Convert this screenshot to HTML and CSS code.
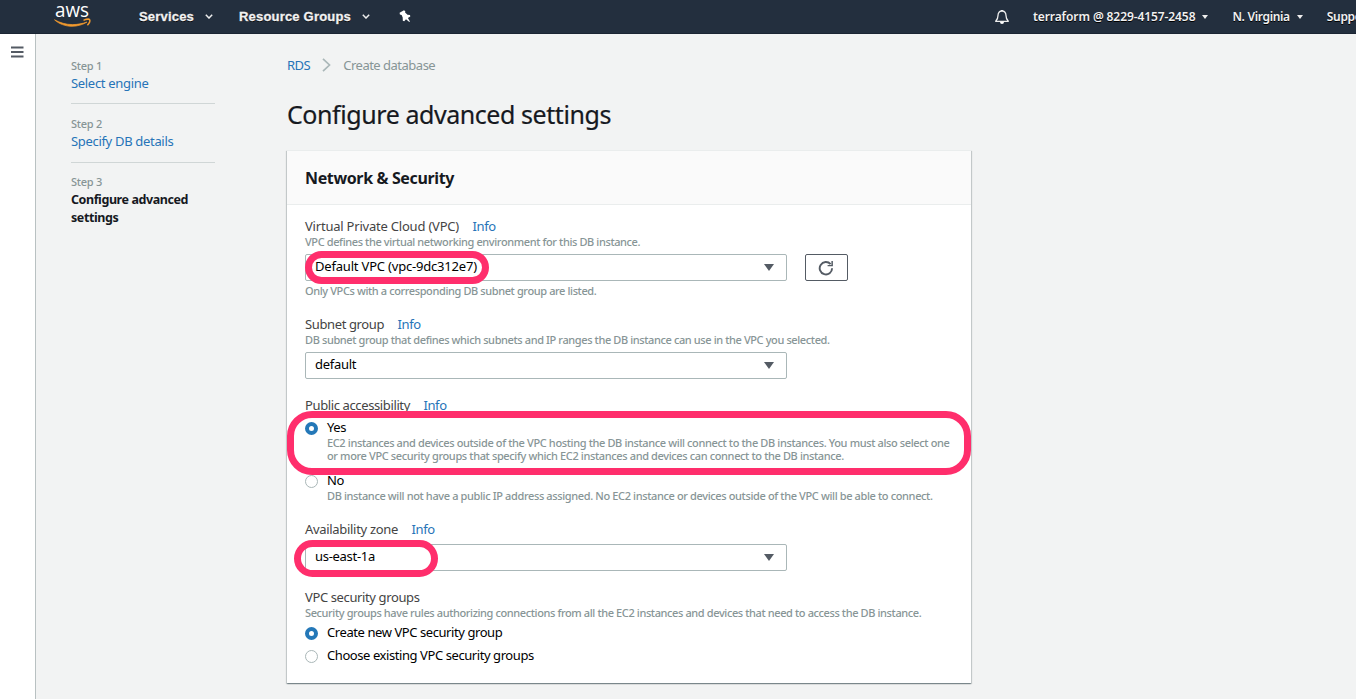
FILE: index.html
```html
<!DOCTYPE html>
<html lang="en">
<head>
<meta charset="utf-8">
<title>RDS - Create database</title>
<link rel="stylesheet" href="styles.css">
</head>
<body>
<header class="topbar">
  <svg class="logo" viewBox="0 0 38 24" width="38" height="24"><text x="1" y="12" class="logo-word" textLength="34" lengthAdjust="spacingAndGlyphs">aws</text><path d="M.5 14.800C5 19 11.500 21.300 18 21.300c5.500 0 10.800-1.600 15-4.200-4.500 1.600-9.500 2.500-14.600 2.500C12 19.600 6 17.800.5 14.800z" fill="#f29a2e" stroke="#f29a2e" stroke-width=".7"/><path d="M29.500 15.400c3-1.300 5.800-1.300 6.200-.6.400 1-.4 3.500-2.300 5.500" fill="none" stroke="#f29a2e" stroke-width="1.500"/></svg>
  <div class="menu services"><span>Services</span><svg width="8" height="5" viewBox="0 0 8 5"><path d="M.8.800 4 4 7.200.800" /></svg></div>
  <div class="menu groups"><span>Resource Groups</span><svg width="8" height="5" viewBox="0 0 8 5"><path d="M.8.800 4 4 7.200.800" /></svg></div>
  <svg class="pin" width="12" height="13" viewBox="0 0 12 13"><path d="M.6 2.800 5 .3 6.300 1.200 6.100 2.600 8.500 4.700 11 5 11.300 6.600 8.900 8.100 10.900 11.400 10.300 12 7 9.200 5.200 11.300 3.800 10.800 3.700 7.600 2.600 4.900.9 4.400z"/></svg>
  <div class="account">
    <svg class="bell" width="16" height="16" viewBox="0 0 16 16"><path d="M1.700 12.300h12.600c-2-2-2.300-3.300-2.300-5.800C12 3.700 10.500 2 8 2S4 3.700 4 6.500c0 2.500-.3 3.800-2.300 5.800z" fill="none" stroke="#eee" stroke-width="1.300" stroke-linejoin="round"/><path d="M6 13h4a2 2 0 0 1-4 0zM7.200.9h1.600V2H7.200z" fill="#fff"/></svg>
    <span class="user">terraform @ 8229-4157-2458</span><i class="caret"></i>
    <span class="region">N. Virginia</span><i class="caret"></i>
    <span class="support">Support</span>
  </div>
</header>
<div class="shell">
  <aside class="rail"><svg width="13" height="12" viewBox="0 0 13 12"><path d="M0 1.500h12.500M0 6h12.500M0 10.500h12.500" stroke="#545b64" stroke-width="1.800"/></svg></aside>
  <nav class="steps">
    <div class="step"><small>Step 1</small><a>Select engine</a></div>
    <div class="step second"><small>Step 2</small><a>Specify DB details</a></div>
    <div class="step current"><small>Step 3</small><b>Configure advanced<br>settings</b></div>
  </nav>
  <main>
    <div class="crumbs"><a>RDS</a><svg width="9" height="14" viewBox="0 0 9 14"><path d="M1 .8 7.500 7 1 13.200" fill="none" stroke="#aab7b8" stroke-width="1.700"/></svg><span>Create database</span></div>
    <h1>Configure advanced settings</h1>
    <section class="card">
      <h2>Network &amp; Security</h2>
      <div class="body">
        <div class="field vpc">
          <label><span>Virtual Private Cloud (VPC)</span> <a>Info</a></label>
          <p>VPC defines the virtual networking environment for this DB instance.</p>
          <div class="row">
            <div class="select"><span>Default VPC (vpc-9dc312e7)</span><i></i><div class="mark mark-vpc"></div></div>
            <button class="refresh" aria-label="Refresh"><svg width="16" height="16" viewBox="0 0 16 16"><path d="M14.100 8.200A6.200 6.200 0 1 1 12.600 4.200" fill="none" stroke="#545b64" stroke-width="1.900"/><path d="M14.900.9v5.400H9.600V4.900l3.800 0V.9z" fill="#545b64"/></svg></button>
          </div>
          <p class="hint">Only VPCs with a corresponding DB subnet group are listed.</p>
        </div>
        <div class="field subnet">
          <label><span>Subnet group</span> <a>Info</a></label>
          <p>DB subnet group that defines which subnets and IP ranges the DB instance can use in the VPC you selected.</p>
          <div class="select"><span>default</span><i></i></div>
        </div>
        <div class="field public">
          <label><span>Public accessibility</span> <a>Info</a></label>
          <div class="option yes"><i class="radio on"></i><div><strong>Yes</strong><p>EC2 instances and devices outside of the VPC hosting the DB instance will connect to the DB instances. You must also select one<br>or more VPC security groups that specify which EC2 instances and devices can connect to the DB instance.</p></div><div class="mark mark-public"></div></div>
          <div class="option no"><i class="radio"></i><div><strong>No</strong><p>DB instance will not have a public IP address assigned. No EC2 instance or devices outside of the VPC will be able to connect.</p></div></div>
        </div>
        <div class="field zone">
          <label><span>Availability zone</span> <a>Info</a></label>
          <div class="select"><span>us-east-1a</span><i></i><div class="mark mark-zone"></div></div>
        </div>
        <div class="field security">
          <label><span>VPC security groups</span></label>
          <p>Security groups have rules authorizing connections from all the EC2 instances and devices that need to access the DB instance.</p>
          <div class="option new"><i class="radio on"></i><strong>Create new VPC security group</strong></div>
          <div class="option existing"><i class="radio"></i><strong>Choose existing VPC security groups</strong></div>
        </div>
      </div>
    </section>
  </main>
</div>
</body>
</html>
```

FILE: styles.css
```css
* { box-sizing: border-box; }
body { margin: 0; height: 699px; overflow: hidden; background: #f2f3f3; color: #000; font: 13px/18px "Noto Sans", sans-serif; letter-spacing: -.38px; }
a { color: #2674b8; }
p, h1, h2 { margin: 0; }

.topbar { display: flex; align-items: center; height: 34px; background: #232f3e; border-bottom: 1px solid #1b2533; color: #f2f2f2; overflow: hidden; }
.topbar > * { flex: none; }
.logo { align-self: flex-start; margin: 5px 0 0 54px; overflow: visible; }
.logo-word { font: 500 20px "Open Sans", sans-serif; letter-spacing: 0; fill: #fff; }
.menu { display: flex; align-items: center; gap: 11px; font: bold 13px/18px "Liberation Sans", sans-serif; letter-spacing: .19px; text-shadow: 0 1px 0 #000; -webkit-text-stroke: .3px #f2f2f2; white-space: nowrap; }
.menu path { fill: none; stroke: #eee; stroke-width: 1.5; }
.services { margin-left: 47px; }
.groups { margin-left: 26px; }
.pin { margin-left: 29px; fill: #fff; }
.account { display: flex; align-items: center; margin-left: 583px; font: 600 12px/18px "Noto Sans", sans-serif; letter-spacing: -.33px; text-shadow: 0 1px 0 #000; white-space: nowrap; }
.user { margin-left: 23px; letter-spacing: -.087px; }
.region { margin-left: 24px; }
.support { margin-left: 24px; }
.caret { margin-left: 7px; border: 3.5px solid transparent; border-top: 4px solid #eee; border-bottom: 0; }

.shell { display: flex; height: 665px; }
.rail { flex: none; width: 36px; padding: 12px 0 0 11px; background: #fff; border-right: 1px solid #b9c1c2; }
.rail svg { display: block; }
.steps { flex: none; width: 144px; margin: 23px 72px 0 35px; }
.step { padding-bottom: 11px; margin-bottom: 11px; border-bottom: 1px solid #d0d6d6; white-space: nowrap; }
.step.second { padding-bottom: 12px; margin-bottom: 10px; }
.step small { display: block; font-size: 11px; font-weight: 500; line-height: 17px; letter-spacing: -.25px; color: #879596; }
.step a, .step b { display: block; letter-spacing: -.32px; }
.step b { margin-top: 1px; font-size: 12.5px; letter-spacing: -.42px; color: #16191f; }
.step.current { border: 0; }

main { flex: none; width: 684px; }
.crumbs { display: flex; align-items: center; gap: 12px; height: 18px; margin-top: 22px; letter-spacing: -.5px; color: #879596; }
h1 { margin-top: 22px; font-size: 25px; line-height: 36px; font-weight: 400; letter-spacing: -.43px; color: #16191f; white-space: nowrap; -webkit-text-stroke: .2px #16191f; }
.card { height: 533px; margin-top: 18px; background: #fff; border-top: 1px solid #eaeded; box-shadow: 0 1px 1px rgba(0,28,36,.3), 1px 1px 1px rgba(0,28,36,.15), -1px 1px 1px rgba(0,28,36,.15); }
h2 { height: 54px; padding: 0 18px; background: #fafafa; border-bottom: 1px solid #eaeded; font-size: 16px; line-height: 54px; font-weight: 700; letter-spacing: -.37px; color: #16191f; }
.body { padding: 12px 18px; white-space: nowrap; }
.field label { display: flex; gap: 13.500px; height: 18px; color: #444; }
.field p { font-size: 11px; font-weight: 500; line-height: 13px; letter-spacing: -.37px; color: #879596; }
.field .hint, .subnet p, .vpc p, .security p { letter-spacing: -.39px; }
.select { position: relative; display: flex; align-items: center; justify-content: space-between; width: 482px; height: 27px; padding: 0 12px 3px 9px; border: 1px solid #aab7b8; border-radius: 2px; letter-spacing: -.3px; }
.select > i { margin-top: 3px; border: 5px solid transparent; border-top: 7px solid #545b64; border-bottom: 0; }
.row { display: flex; gap: 18px; }
.refresh { display: grid; place-items: center; width: 43px; height: 27px; padding: 0 1px 0 0; border: 1px solid #545b64; border-radius: 2px; background: #fff; }
.option { position: relative; display: flex; gap: 9px; }
.option strong { display: block; margin-top: -1px; font-weight: 400; line-height: 18px; letter-spacing: -.425px; }
.option p { margin-top: 0; }
.radio { flex: none; width: 13px; height: 13px; margin-top: 3px; border: 1px solid #aab7b8; border-radius: 50%; background: #fff; }
.radio.on { border: 4px solid #2478b8; }
.vpc label span { letter-spacing: -.21px; }
.vpc .select { letter-spacing: -.19px; }
.vpc p { margin-bottom: 6px; }
.vpc p.hint { margin: 3px 0 0; }
.subnet { margin-top: 18px; }
.subnet p { margin-bottom: 6px; }
.public { margin-top: 17px; }
.yes { margin-top: 5px; }
.no { margin-top: 10px; }
.zone { margin-top: 18px; }
.zone label span { letter-spacing: -.31px; }
.zone .select { margin-top: 6px; }
.security { margin-top: 17px; }
.new { margin-top: 5px; }
.existing { margin-top: 6px; }
.mark { position: absolute; border: 7px solid #ff2e6c; pointer-events: none; }
.mark-vpc { left: -1px; top: -4px; width: 184px; height: 33px; border-radius: 17px; }
.mark-public { left: -18px; top: -8px; width: 684px; height: 64px; border-radius: 25px; }
.mark-zone { left: -12px; top: -5px; width: 144px; height: 37px; border-radius: 19px; }
```
